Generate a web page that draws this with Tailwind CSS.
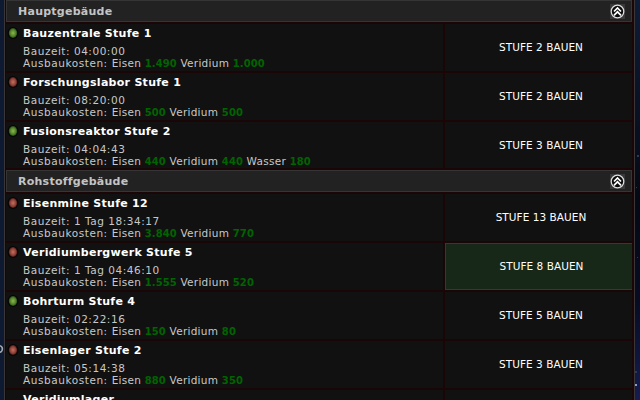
<!DOCTYPE html>
<html lang="de">
    <head>
        <meta charset="UTF-8" />
        <meta name="viewport" content="width=device-width, initial-scale=1.0" />
        <title>Gebäude</title>
        <script src="https://cdn.jsdelivr.net/npm/@tailwindcss/browser@4"></script>
    </head>

    <body class="relative h-[400px] overflow-hidden bg-[#0c1830] font-['DejaVu_Sans',sans-serif] text-[#c8c8c8]">
        <!-- Shared icons -->
        <svg class="absolute size-0">
            <defs>
                <radialGradient id="green"><stop offset="0" stop-color="#8cb84e" /><stop offset=".7" stop-color="#4f7f26" /><stop offset="1" stop-color="#27461a" /></radialGradient>
                <radialGradient id="red"><stop offset="0" stop-color="#c4705f" /><stop offset=".7" stop-color="#8c3f36" /><stop offset="1" stop-color="#4a1b17" /></radialGradient>
                <linearGradient id="sky" x2="0" y2="1"><stop offset="0" stop-color="#0e1c36" /><stop offset=".5" stop-color="#050914" /><stop offset=".75" stop-color="#070c22" /><stop offset="1" stop-color="#151d50" /></linearGradient>
            </defs>
            <symbol id="lamp-green" viewBox="0 0 12 12">
                <ellipse cx="6" cy="6" rx="5.5" ry="6" fill="#050505" />
                <ellipse cx="6" cy="6" rx="4.2" ry="4.9" fill="url(#green)" />
            </symbol>
            <symbol id="lamp-red" viewBox="0 0 12 12">
                <ellipse cx="6" cy="6" rx="5.5" ry="6" fill="#050505" />
                <ellipse cx="6" cy="6" rx="4.2" ry="4.9" fill="url(#red)" />
            </symbol>
            <symbol id="collapse" viewBox="0 0 15 15">
                <rect width="15" height="15" fill="#383838" />
                <circle cx="7.5" cy="7.5" r="6.3" fill="#0a0a0a" stroke="#dedede" stroke-width="1.3" />
                <path d="M4 7.5 7.5 4 11 7.5M4 11.3 7.5 7.8 11 11.3" fill="none" stroke="#fff" stroke-width="1.7" />
            </symbol>
        </svg>

        <!-- Night sky behind the table -->
        <svg class="absolute inset-0 -z-10 h-[400px] w-[640px]">
            <rect width="5" height="400" fill="#0d1a32" />
            <rect x="634" width="6" height="400" fill="url(#sky)" />
            <circle cx="-1" cy="349" r="3.4" fill="none" stroke="#a8acb4" stroke-width="1.6" />
            <path d="M637 155h2v2h-2zM636 187h1v1h-1zM637 257h1v1h-1zM635 371h2v2h-2z" fill="#2a3a5c" />
            <path d="M635 384h2v2h-2z" fill="#8f9bd0" />
        </svg>

        <div class="ml-1 h-[400px] w-[631px] overflow-hidden border-x border-[#3a3537] bg-[#1a0606] pl-px pr-[2px]">
            <div id="list" class="grid grid-cols-[437px_187px] gap-[2px]"></div>
        </div>

        <script>
            const rows = [
                { head: "Hauptgebäude" },
                { name: "Bauzentrale Stufe 1", lamp: "green", time: "04:00:00", cost: [["Eisen", "1.490"], ["Veridium", "1.000"]], next: 2 },
                { name: "Forschungslabor Stufe 1", lamp: "red", time: "08:20:00", cost: [["Eisen", "500"], ["Veridium", "500"]], next: 2 },
                { name: "Fusionsreaktor Stufe 2", lamp: "green", time: "04:04:43", cost: [["Eisen", "440"], ["Veridium", "440"], ["Wasser", "180"]], next: 3, last: true },
                { head: "Rohstoffgebäude" },
                { name: "Eisenmine Stufe 12", lamp: "red", time: "1 Tag 18:34:17", cost: [["Eisen", "3.840"], ["Veridium", "770"]], next: 13 },
                { name: "Veridiumbergwerk Stufe 5", lamp: "red", time: "1 Tag 04:46:10", cost: [["Eisen", "1.555"], ["Veridium", "520"]], next: 8, active: true },
                { name: "Bohrturm Stufe 4", lamp: "green", time: "02:22:16", cost: [["Eisen", "150"], ["Veridium", "80"]], next: 5 },
                { name: "Eisenlager Stufe 2", lamp: "red", time: "05:14:38", cost: [["Eisen", "880"], ["Veridium", "350"]], next: 3 },
                { name: "Veridiumlager" },
            ];

            document.getElementById("list").innerHTML = rows
                .map((r) => {
                    if (r.head) {
                        return `<div class="col-span-2 flex h-[22px] items-center justify-between border border-[#353535] bg-[#222] pl-[11px] pr-[6px]">
                            <span class="pt-px text-[11px] font-bold leading-[20px] tracking-[0.25px] whitespace-nowrap text-[#c4c4c4]">${r.head}</span>
                            <svg class="size-[15px]"><use href="#collapse" /></svg>
                        </div>`;
                    }
                    const cost = (r.cost || []).map(([k, v]) => `${k} <b class="text-[10px] tracking-[0.1px] text-[#006400]">${v}</b>`).join(" ");
                    const details = r.time
                        ? `<div class="leading-[12px] tracking-[0.53px]">Bauzeit: ${r.time}</div>
                           <div class="leading-[12px] tracking-[0.27px]"><span class="tracking-[0.56px]">Ausbaukosten: </span>${cost}</div>`
                        : "";
                    return `<div class="${r.last ? "h-[46px]" : "h-[47px]"} flex bg-[#111]">
                        <div class="w-[17px] pl-px pt-[3px]">${r.lamp ? `<svg class="size-[12px]"><use href="#lamp-${r.lamp}" /></svg>` : ""}</div>
                        <div class="whitespace-nowrap text-[10.5px]">
                            <div class="mb-[2px] pt-px text-[11px] font-bold leading-[18px] tracking-[0.28px] text-white">${r.name}</div>
                            ${details}
                        </div>
                    </div>
                    <div class="${r.active ? "border border-r-0 border-[#333a33] bg-[#182818]" : "bg-[#111]"} ${r.last ? "pt-[2px]" : ""} flex items-center justify-center pl-[5px] whitespace-nowrap text-[10.5px] tracking-[0.05px] text-white">
                        ${r.next ? `<span>STUFE ${r.next} BAUEN</span>` : ""}
                    </div>`;
                })
                .join("");
        </script>
    </body>
</html>
